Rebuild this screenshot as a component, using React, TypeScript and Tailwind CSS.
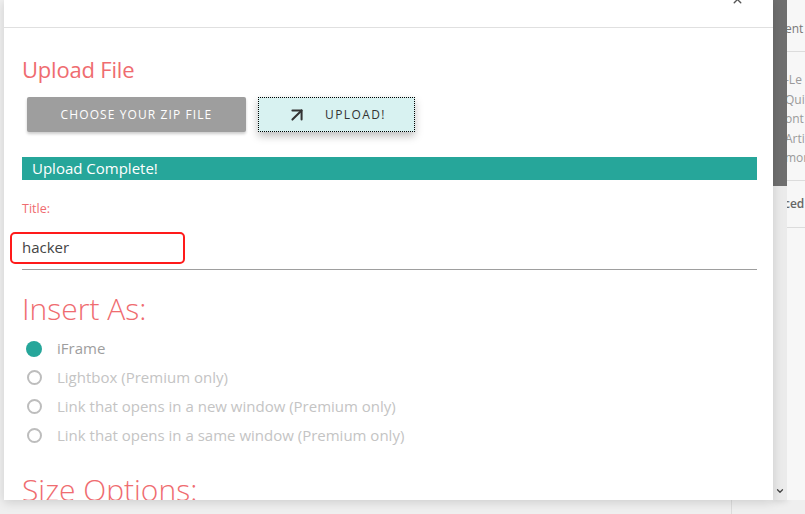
import { X, ArrowUpRight, ChevronDown } from 'lucide-react';

const options = [
    { label: 'iFrame', checked: true },
    { label: 'Lightbox (Premium only)', checked: false },
    { label: 'Link that opens in a new window (Premium only)', checked: false },
    { label: 'Link that opens in a same window (Premium only)', checked: false },
];

function Radio({ checked }: { checked: boolean }) {
    if (checked) {
        return <span className="block w-[16px] h-[16px] rounded-full bg-[#26a69a]" />;
    }
    return <span className="block w-[15px] h-[15px] rounded-full border-2 border-[#bdbdbd]" />;
}

export default function App() {
    return (
        <div
            className="w-[805px] h-[514px] overflow-hidden bg-[#efefef] flex flex-col"
            style={{ fontFamily: '"Open Sans", "Noto Sans", sans-serif' }}
        >
            <div className="flex h-[500px]">
                <div className="w-[4px] bg-[#f0f0f0]" />

                {/* modal */}
                <div className="w-[769px] overflow-hidden bg-white shadow-[0_2px_10px_rgba(0,0,0,0.15)] z-10">
                    <div className="h-[28px] border-b border-[#e0e0e0] flex justify-end items-end overflow-hidden pr-[29px]">
                        <X className="w-[13px] h-[13px] mb-[21px] text-[#555]" strokeWidth={2.5} />
                    </div>

                    <div className="pl-[18px] pr-[16px]">
                        <h2 className="mt-[26px] text-[22px] leading-[30px] text-[#ef6c70] tracking-[-0.2px]">Upload File</h2>

                        <div className="mt-[13px] ml-[5px] flex gap-[12px]">
                            <button className="w-[219px] h-[35px] bg-[#9e9e9e] text-white text-[12px] tracking-[1.1px] rounded-[2px] shadow-[0_2px_3px_rgba(0,0,0,0.2)]">
                                CHOOSE YOUR ZIP FILE
                            </button>
                            <button className="w-[157px] h-[35px] bg-[#d8f2f1] text-[#333] text-[12px] tracking-[1.4px] border border-dotted border-black flex items-center justify-center gap-[17px] shadow-[0_4px_8px_rgba(0,0,0,0.25)]">
                                <ArrowUpRight className="w-[22px] h-[22px] -ml-[1px]" strokeWidth={2.2} />
                                UPLOAD!
                            </button>
                        </div>

                        <div className="mt-[25px] h-[23px] bg-[#26a69a] text-white text-[15px] leading-[23px] pl-[10px]">
                            Upload Complete!
                        </div>

                        <div className="mt-[20px] text-[12.5px] leading-[18px] text-[#ef6c70]">Title:</div>

                        <div className="mt-[14px] -ml-[12px] w-[175px] h-[32px] border-2 border-[#ff1a1a] rounded-[5px] flex items-center pl-[10px] pb-[2px] text-[15px] text-[#444]">
                            hacker
                        </div>
                        <div className="mt-[5px] h-px bg-[#9e9e9e]" />

                        <h3 className="mt-[19px] text-[30px] leading-[40px] font-light text-[#ef6c70]">Insert As:</h3>

                        <div className="mt-[5px] flex flex-col">
                            {options.map((o) => (
                                <label key={o.label} className="h-[29px] flex items-center gap-[15px] pl-[4px]">
                                    <span className="w-[16px] flex justify-center">
                                        <Radio checked={o.checked} />
                                    </span>
                                    <span className={`text-[15px] ${o.checked ? 'text-[#9e9e9e]' : 'text-[#c4c4c4]'}`}>
                                        {o.label}
                                    </span>
                                </label>
                            ))}
                        </div>

                        <h3 className="mt-[20px] text-[30px] leading-[40px] font-light text-[#ef6c70]">Size Options:</h3>
                    </div>
                </div>

                {/* scrollbar */}
                <div className="w-[14px] bg-[#ebebeb] flex flex-col justify-between shadow-[0_2px_6px_rgba(0,0,0,0.1)]">
                    <div className="h-[186px] bg-[#6f6f6f]" />
                    <ChevronDown className="w-[10px] h-[10px] mb-[4px] ml-[2px] text-[#444]" strokeWidth={3} />
                </div>

                {/* page behind */}
                <div className="flex-1 bg-[#f7f7f7] text-[12px] text-[#9a9a9a] overflow-hidden whitespace-nowrap">
                    <div className="h-[52px] border-b border-[#dcdcdc] flex items-center pt-[6px] text-[#777] -ml-[2px]">ent</div>
                    <div className="h-[129px] border-b border-[#dcdcdc] pt-[18px] leading-[19.5px] -ml-[2px]">
                        <div>-Le</div>
                        <div>Quic</div>
                        <div>ont</div>
                        <div>Arti</div>
                        <div>mor</div>
                    </div>
                    <div className="h-[47px] border-b border-[#dcdcdc] flex items-center font-semibold text-[#666] -ml-[3px]">ced</div>
                </div>
            </div>
            <div className="flex-1 flex">
                <div className="w-[731px]" />
                <div className="w-px bg-[#dcdcdc]" />
            </div>
        </div>
    );
}
